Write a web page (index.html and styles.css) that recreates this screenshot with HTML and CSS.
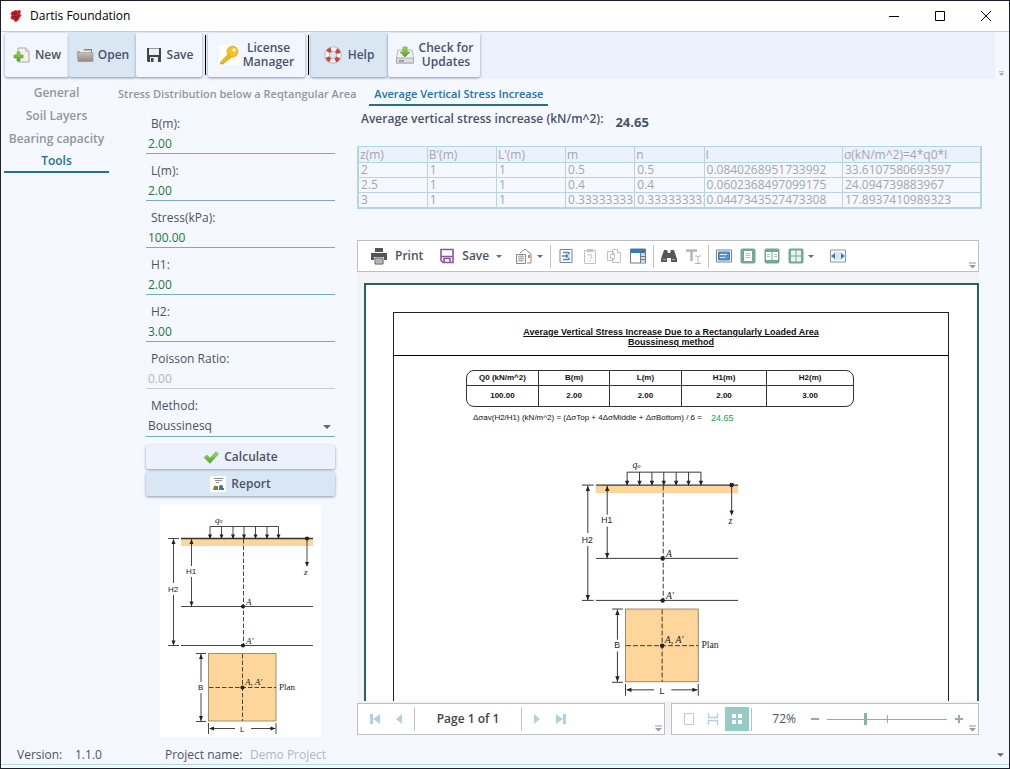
FILE: index.html
```html
<!DOCTYPE html>
<html lang="en">
<head>
<meta charset="utf-8">
<title>Dartis Foundation</title>
<link rel="stylesheet" href="styles.css">
</head>
<body>
<svg class="defs" aria-hidden="true">
  <defs>
    <linearGradient id="leaf" x1="0" y1="0" x2="0" y2="1"><stop offset="0" stop-color="#a3dc60"/><stop offset="1" stop-color="#4f9f28"/></linearGradient>
    <linearGradient id="folderg" x1="0" y1="0" x2="0" y2="1"><stop offset="0" stop-color="#c9c2ba"/><stop offset="1" stop-color="#8f8982"/></linearGradient>
  </defs>
  <symbol id="diagram" viewBox="0 0 161 232">
    <rect width="161" height="232" fill="#fff"/>
    <rect x="21" y="34" width="132" height="7" fill="#fed59b"/>
    <rect x="48.500" y="148.500" width="67.500" height="67.500" fill="#fed59b" stroke="#8c7a60" stroke-width=".8"/>
    <g stroke="#333" fill="none" stroke-width=".9">
      <path d="M21 33.500h132" stroke-width="1.300"/>
      <path d="M50 33V21.500h68.500V33M61.500 21.500V33M73 21.500V33M84 21.500V33M95.500 21.500V33M107 21.500V33"/>
      <path d="M147 33.500V60M21 101.500h132M21 140.500h132M8 33.500h11M8 140.500h11"/>
      <path d="M31.500 34v27M31.500 72v29M13.500 34v44M13.500 90v50"/>
      <path d="M83.500 34v107" stroke-dasharray="4.500 2"/>
      <path d="M82.500 149v67M49 182.500h67" stroke-dasharray="4.500 2"/>
      <path d="M36 148.500h10M36 216.500h10M41 149v28M41 188v28M48.500 218v11M116 218v11M50 223.500h25M91 223.500h24"/>
    </g>
    <g fill="#222">
      <circle cx="147" cy="33.500" r="2.100"/><circle cx="83" cy="101.500" r="2.100"/><circle cx="83" cy="140.500" r="2.100"/><circle cx="82.500" cy="182.500" r="2.100"/>
      <path d="M50 34l-2-4.500h4zM61.500 34l-2-4.500h4zM73 34l-2-4.500h4zM84 34l-2-4.500h4zM95.500 34l-2-4.500h4zM107 34l-2-4.500h4zM118.500 34l-2-4.500h4z"/>
      <path d="M147 62l-2-5h4zM31.500 34l-2 5h4zM31.500 101.500l-2-5h4zM13.500 34l-2 5h4zM13.500 140.500l-2-5h4zM41 149l-2 5h4zM41 216l-2-5h4zM49 223.500l5-2v4zM115.500 223.500l-5-2v4z"/>
    </g>
  </symbol>
  <symbol id="overflow" viewBox="0 0 7 7"><path d="M0 1h7" stroke="#999"/><path d="M0 3h7L3.500 6.500z" fill="#999"/></symbol>
  <symbol id="caret" viewBox="0 0 8 4"><path d="M0 0h8L4 4z" fill="#666a72"/></symbol>
</svg>

<div class="window">
  <header class="titlebar">
    <svg class="app-icon" viewBox="0 0 14 14"><path d="M3 2.500L5 2l1-1 2 .6L11 1l1 2-1 1.500 1.500 2L11 8l-1 2.500-2 2-2 .500-1-2-2-.5L1.500 9l1-2.500-1-2z" fill="#c5242c"/><path d="M4 4l2 1 2-1.500M3.500 8l2-1 2 1.500 2-2M6 10l2-.5" stroke="#6e0f18" fill="none"/></svg>
    <h1>Dartis Foundation</h1>
    <div class="win-controls">
      <button aria-label="Minimize"><svg viewBox="0 0 12 12"><path d="M1 6.500h10" stroke="#000"/></svg></button>
      <button aria-label="Maximize"><svg viewBox="0 0 12 12"><path d="M1.500 1.500h9v9h-9z" fill="none" stroke="#000"/></svg></button>
      <button aria-label="Close"><svg viewBox="0 0 12 12"><path d="M1 1l10 10M11 1L1 11" stroke="#000"/></svg></button>
    </div>
  </header>

  <div class="ribbon">
    <div class="ribbon-bar">
      <button class="tool w-new"><svg class="i18" viewBox="0 0 18 18"><path d="M5 2h8l3 3v11H5z" fill="#f2f2ea" stroke="#a9aaa2"/><path d="M13 2v3h3" fill="#fff" stroke="#a9aaa2"/><path d="M4 6h3v3h3v3H7v3H4v-3H1V9h3z" fill="url(#leaf)" stroke="#5ba336" stroke-width=".7"/></svg>New</button>
      <button class="tool tinted w-open"><svg class="i18" viewBox="0 0 18 18"><path d="M2 5h5l1.500-2H16v12H2z" fill="#8b857e"/><path d="M3.500 4.500H15V8H3.500z" fill="#eee"/><path d="M1 6.500h16v9H2z" fill="url(#folderg)" stroke="#8f8982" stroke-width=".5"/></svg>Open</button>
      <button class="tool w-save"><svg class="i18" viewBox="0 0 18 18"><path d="M2 2h14v14H3l-1-1z" fill="#3f454b"/><path d="M4 2.500h10V9H4z" fill="#e9f2f6"/><path d="M5 11h8v5H5z" fill="#eee"/><path d="M6 12h2.500v4H6z" fill="#3f454b"/></svg>Save</button>
      <span class="sep"></span>
      <button class="tool w-license"><svg class="i20" viewBox="0 0 20 20"><rect width="20" height="20" fill="#fff"/><path d="M9.500 9L2 16.500 1.500 19h3l.5-2h2l.5-2h2l3-3z" fill="#f5b916" stroke="#cf9414" stroke-width=".7"/><circle cx="13.500" cy="6.500" r="5.500" fill="#f9bf1c" stroke="#d99d18" stroke-width=".7"/><circle cx="15" cy="5" r="1.700" fill="#fff"/></svg><span>License<br>Manager</span></button>
      <span class="sep"></span>
      <button class="tool tinted w-help"><svg class="i18" viewBox="0 0 18 18"><circle cx="9" cy="9" r="6" fill="none" stroke="#f7f3f1" stroke-width="4.500"/><circle cx="9" cy="9" r="6" fill="none" stroke="#c6483f" stroke-width="4.500" stroke-dasharray="4 5.425" stroke-dashoffset="-2.700"/><circle cx="9" cy="9" r="8.200" fill="none" stroke="#a9928f" stroke-width=".6"/><circle cx="9" cy="9" r="3.600" fill="none" stroke="#a9928f" stroke-width=".6"/></svg>Help</button>
      <button class="tool w-check"><svg class="i20" viewBox="0 0 20 20"><path d="M3 5h14l1.500 8v5h-17v-5z" fill="#f6f6f6" stroke="#b4b6b9"/><path d="M1.500 13h17v5h-17z" fill="#dcdde0" stroke="#aaa"/><path d="M4 15h5v2H4z" fill="#9b9ea3"/><path d="M8 2h4v5h3l-5 5-5-5h3z" fill="url(#leaf)" stroke="#5a9f30" stroke-width=".6"/></svg><span>Check for<br>Updates</span></button>
    </div>
    <svg class="overflow"><use href="#overflow"/></svg>
  </div>

  <main class="main">
    <nav class="side-tabs">
      <a href="#general">General</a>
      <a href="#soil">Soil Layers</a>
      <a href="#bearing">Bearing capacity</a>
      <a href="#tools" class="active">Tools</a>
    </nav>

    <div class="content">
      <nav class="top-tabs">
        <a href="#distribution">Stress Distribution below a Reqtangular Area</a>
        <a href="#average" class="active">Average Vertical Stress Increase</a>
      </nav>
      <div class="columns">
        <form class="form">
          <div class="field"><label for="b">B(m):</label><input id="b" value="2.00"></div>
          <div class="field"><label for="l">L(m):</label><input id="l" value="2.00"></div>
          <div class="field"><label for="stress">Stress(kPa):</label><input id="stress" value="100.00"></div>
          <div class="field"><label for="h1">H1:</label><input id="h1" value="2.00"></div>
          <div class="field"><label for="h2">H2:</label><input id="h2" value="3.00"></div>
          <div class="field"><label for="poisson">Poisson Ratio:</label><input id="poisson" value="0.00" disabled></div>
          <div class="field"><label for="method">Method:</label>
            <div class="select"><select id="method"><option>Boussinesq</option></select><svg class="caret"><use href="#caret"/></svg></div>
          </div>
          <div class="actions">
            <button type="button" class="action"><svg class="i16" viewBox="0 0 16 16"><path d="M1 8.500L4 6l3 3 6-6.500L15.500 5 7 14.500z" fill="url(#leaf)" stroke="#6db33c" stroke-width=".5"/></svg>Calculate</button>
            <button type="button" class="action tinted"><svg class="i16" viewBox="0 0 16 16"><rect width="16" height="16" fill="#fff"/><path d="M4 2.500h9M5 4.500h7M6 6.500h3" stroke="#8a8a8a"/><path d="M4 10h4v4H3z" fill="#7c7c45"/><circle cx="11" cy="11" r="2" fill="#3f6f9e"/><path d="M9 12h5v2H9z" fill="#3f7f78"/></svg>Report</button>
          </div>
          <svg class="form-figure" viewBox="0 0 161 232" role="img" aria-label="Loaded area diagram">
            <use href="#diagram" width="161" height="232"/>
            <g class="fig-sans"><text x="26" y="69">H1</text><text x="8" y="87">H2</text><text x="38" y="185">B</text><text x="80" y="227">L</text></g>
            <g class="fig-serif"><text x="55" y="18">q<tspan class="sub">o</tspan></text><text x="144" y="70">z</text><text x="86" y="100">A</text><text x="86" y="139">A′</text><text x="85" y="180">A, A′</text></g>
            <text class="fig-plan" x="119" y="185">Plan</text>
          </svg>
        </form>

        <section class="results">
          <h2 class="result"><span>Average vertical stress increase (kN/m^2):</span><output>24.65</output></h2>
          <table class="grid">
            <colgroup><col class="c-s"><col class="c-s"><col class="c-s"><col class="c-s"><col class="c-s"><col class="c-l"><col class="c-l"></colgroup>
            <thead><tr><th>z(m)</th><th>B'(m)</th><th>L'(m)</th><th>m</th><th>n</th><th>I</th><th>σ(kN/m^2)=4*q0*I</th></tr></thead>
            <tbody>
              <tr><td>2</td><td>1</td><td>1</td><td>0.5</td><td>0.5</td><td>0.0840268951733992</td><td>33.6107580693597</td></tr>
              <tr><td>2.5</td><td>1</td><td>1</td><td>0.4</td><td>0.4</td><td>0.0602368497099175</td><td>24.094739883967</td></tr>
              <tr><td>3</td><td>1</td><td>1</td><td>0.3333333333</td><td>0.3333333333</td><td>0.0447343527473308</td><td>17.8937410989323</td></tr>
            </tbody>
          </table>

          <div class="viewer">
            <div class="vbar">
              <button class="vbtn v-print"><svg class="i18" viewBox="0 0 18 18"><path d="M5 1h8v4H5zM1 6h16v7h-3v-3H4v3H1z" fill="#50565c"/><path d="M5 11h8v6H5z" fill="#ddd" stroke="#50565c"/><path d="M6 13h6M6 15h6" stroke="#8a8a8a"/></svg>Print</button>
              <button class="vbtn v-save"><svg class="i16" viewBox="0 0 16 16"><path d="M2 1.500h12v13H4l-2-2z" fill="#fff" stroke="#8a55a5" stroke-width="1.600"/><path d="M2 8.500h12M5 14v-3.500h6V14" fill="none" stroke="#8a55a5" stroke-width="1.600"/></svg>Save<svg class="mini"><use href="#caret"/></svg></button>
              <button class="vbtn" aria-label="Send"><svg class="i18" viewBox="0 0 18 18"><path d="M5 6l5-4 6 5v9h-4" fill="#fff" stroke="#8a8a8a"/><path d="M1.500 7.500h9v9h-9z" fill="#f7f7f7" stroke="#8a8a8a"/><path d="M3 9.500h6M3 11.500h6M3 13.500h6M5 8v7M7 8v7" stroke="#b5b5b5"/><path d="M13 8h2v3h-2z" fill="#d9815c"/></svg><svg class="mini"><use href="#caret"/></svg></button>
              <span class="vsep"></span>
              <button class="vbtn" aria-label="Parameters"><svg class="i16" viewBox="0 0 16 16"><path d="M2 1.500h12v13H2z" fill="#fff" stroke="#7a848e"/><path d="M5 4.500h6v2M4 8h5M5 11.500h6v-2" stroke="#4b8bb5" fill="none" stroke-width="1.500"/><path d="M8 5.500L11 8l-3 2.500z" fill="#4b8bb5"/></svg></button>
              <button class="vbtn" aria-label="Paste"><svg class="i16" viewBox="0 0 16 16"><path d="M2.500 2.500h11v13h-11z" fill="#fafafa" stroke="#c2c2c2"/><path d="M5 1h6v3H5z" fill="#c2c2c2"/><path d="M6 7.500q2-2 3.500 0T8 11M8 12v1.500" stroke="#c2c2c2" fill="none"/></svg></button>
              <button class="vbtn" aria-label="Copy"><svg class="i16" viewBox="0 0 16 16"><path d="M1.500 3.500h6v9h-6zM6.500 1.500h5l3 3v10h-8z" fill="#fff" stroke="#c2c2c2"/><path d="M11.500 1.500v3h3M4.500 6.500h4v4h-4z" fill="#fff" stroke="#c2c2c2"/></svg></button>
              <button class="vbtn" aria-label="Thumbnails"><svg class="i16" viewBox="0 0 16 16"><path d="M.5 1h15v14H.5z" fill="#fff" stroke="#727b84"/><path d="M1 1h14v4H1z" fill="#2e7cb8"/><path d="M10 5h5v9.500h-5z" fill="#cfd9e2"/><path d="M10.500 5v10M11 8.500h4M11 11.500h4" stroke="#727b84"/></svg></button>
              <span class="vsep"></span>
              <button class="vbtn" aria-label="Find"><svg class="i16" viewBox="0 0 16 16"><path d="M3 2h3l1 3h2l1-3h3l3 9v3h-6v-4H6v4H0v-3z" fill="#55585c"/><path d="M2 11.500h3M11 11.500h3" stroke="#aaa"/></svg></button>
              <button class="vbtn" aria-label="Text selection"><svg class="i16" viewBox="0 0 16 16"><path d="M1 2.500h11M6.500 2v11" stroke="#b4b6b8" stroke-width="2.500" fill="none"/><path d="M10 8h2l1 1 1-1h2M13 9v6M10 15.500h6" stroke="#b4b6b8" fill="none"/></svg></button>
              <span class="vsep"></span>
              <button class="vbtn" aria-label="Fit screen"><svg class="i16" viewBox="0 0 16 16"><path d="M.5 2h15v12H.5z" fill="#fff" stroke="#71859e"/><path d="M2.500 4h11v8h-11z" fill="#5d93d0" stroke="#3f76b5"/><path d="M4 6.500h7M4 9.500h5" stroke="#dce9f7"/></svg></button>
              <button class="vbtn" aria-label="Whole page"><svg class="i16" viewBox="0 0 16 16"><rect x=".5" y=".5" width="15" height="15" rx="2" fill="#73a893"/><path d="M4 3h8v10H4z" fill="#fff"/><path d="M5.500 5.500h5M5.500 7.500h5M5.500 9.500h5" stroke="#a9c9bc"/></svg></button>
              <button class="vbtn" aria-label="Two pages"><svg class="i16" viewBox="0 0 16 16"><rect x=".5" y=".5" width="15" height="15" rx="2" fill="#73a893"/><path d="M2 4h5.500v8H2zM8.500 4H14v8H8.500z" fill="#fff"/><path d="M3 6.500h3M3 8.500h3M10 6.500h3M10 8.500h3" stroke="#a9c9bc"/></svg></button>
              <button class="vbtn v-multi" aria-label="Multiple pages"><svg class="i16" viewBox="0 0 16 16"><rect x=".5" y=".5" width="15" height="15" rx="2" fill="#73a893"/><path d="M3 2.500h4.500v5H3zM8.500 2.500H13v5H8.500zM3 8.500h4.500v5H3zM8.500 8.500H13v5H8.500z" fill="#eaf4ef"/></svg><svg class="mini"><use href="#caret"/></svg></button>
              <button class="vbtn" aria-label="Page width"><svg class="i16" viewBox="0 0 16 16"><path d="M.5 2h15v12H.5z" fill="#fff" stroke="#8494a6"/><path d="M4 4h8v8H4z" fill="#d5e6f5"/><path d="M1 8l4-3v6zM15 8l-4-3v6z" fill="#4279ae"/></svg></button>
              <svg class="overflow"><use href="#overflow"/></svg>
            </div>

            <div class="canvas">
              <article class="sheet">
                <div class="frame">
                  <h3>Average Vertical Stress Increase Due to a Rectangularly Loaded Area<br>Boussinesq method</h3>
                  <div class="params-box">
                    <table class="params">
                      <colgroup><col class="p-s"><col class="p-s"><col class="p-s"><col><col></colgroup>
                      <tr><th>Q0 (kN/m^2)</th><th>B(m)</th><th>L(m)</th><th>H1(m)</th><th>H2(m)</th></tr>
                      <tr><td>100.00</td><td>2.00</td><td>2.00</td><td>2.00</td><td>3.00</td></tr>
                    </table>
                  </div>
                  <p class="formula"><span>Δσav(H2/H1) (kN/m^2) = (ΔσTop + 4ΔσMiddle + ΔσBottom) / 6 =</span><output>24.65</output></p>
                  <svg class="sheet-figure" viewBox="0 0 161 232" role="img" aria-label="Loaded area diagram">
                    <use href="#diagram" width="161" height="232"/>
                    <g class="fig-sans"><text x="26" y="69">H1</text><text x="8" y="87">H2</text><text x="38" y="185">B</text><text x="80" y="227">L</text></g>
                    <g class="fig-serif"><text x="55" y="18">q<tspan class="sub">o</tspan></text><text x="144" y="70">z</text><text x="86" y="100">A</text><text x="86" y="139">A′</text><text x="85" y="180">A, A′</text></g>
                    <text class="fig-plan" x="119" y="185">Plan</text>
                  </svg>
                </div>
              </article>
            </div>

            <div class="vfoot">
              <div class="pager">
                <button aria-label="First page"><svg class="i12" viewBox="0 0 12 12"><path d="M1 1h3v10H1zM11 1v10L4 6z" fill="#b3cfe0"/></svg></button>
                <button aria-label="Previous page"><svg class="i12" viewBox="0 0 12 12"><path d="M9 1v10L3 6z" fill="#b3cfe0"/></svg></button>
                <span class="page-no">Page 1 of 1</span>
                <button aria-label="Next page"><svg class="i12" viewBox="0 0 12 12"><path d="M3 1v10l6-5z" fill="#b3cfe0"/></svg></button>
                <button aria-label="Last page"><svg class="i12" viewBox="0 0 12 12"><path d="M8 1h3v10H8zM1 1v10l7-5z" fill="#b3cfe0"/></svg></button>
                <svg class="overflow"><use href="#overflow"/></svg>
              </div>
              <div class="zoombar">
                <button aria-label="Single page"><svg class="i12" viewBox="0 0 12 12"><path d="M1.500.5h9v11h-9z" fill="#fff" stroke="#b3cfe0"/></svg></button>
                <button aria-label="Continuous"><svg class="i12" viewBox="0 0 12 12"><path d="M1.500 0v4.500h9V0M1.500 12V7.500h9V12" fill="none" stroke="#b3cfe0" stroke-width="1.400"/></svg></button>
                <button class="on" aria-label="Multi page"><svg class="i12" viewBox="0 0 12 12"><path d="M1 1h4v4H1zM7 1h4v4H7zM1 7h4v4H1zM7 7h4v4H7z" fill="#fff"/></svg></button>
                <span class="vsep"></span>
                <label class="pct" for="zoom">72%</label>
                <button class="step" aria-label="Zoom out"><svg class="i8" viewBox="0 0 8 8"><path d="M0 4h8" stroke="#7fb8a6" stroke-width="2"/></svg></button>
                <input id="zoom" type="range" min="0" max="100" value="32">
                <button class="step" aria-label="Zoom in"><svg class="i8" viewBox="0 0 8 8"><path d="M0 4h8M4 0v8" stroke="#7fb8a6" stroke-width="2"/></svg></button>
                <svg class="overflow"><use href="#overflow"/></svg>
              </div>
            </div>
          </div>
        </section>
      </div>
    </div>
  </main>

  <footer class="status">
    <span class="ver">Version:</span><span class="num">1.1.0</span>
    <label for="project">Project name:</label><input id="project" value="Demo Project" disabled>
    <svg class="overflow"><use href="#caret"/></svg>
  </footer>
</div>
</body>
</html>
```
FILE: styles.css
```css
* { box-sizing: border-box; }
body { margin: 0; font: 12px/16px "Open Sans", "Noto Sans", sans-serif; color: #4b5266; }
button, input, select { font: inherit; color: inherit; margin: 0; padding: 0; border: 0; background: none; border-radius: 0; }
svg { display: block; flex: none; }
h1, h2, h3, p { margin: 0; font: inherit; }
a { color: inherit; text-decoration: none; }
.defs { position: absolute; width: 0; height: 0; }
.i20 { width: 20px; height: 20px; }
.i18 { width: 18px; height: 18px; }
.i16 { width: 16px; height: 16px; }
.i12 { width: 12px; height: 12px; }
.i8 { width: 8px; height: 8px; }
.mini { width: 6px; height: 3px; }
.overflow { width: 7px; height: 7px; margin-left: auto; }

.window { height: 100vh; min-height: 769px; display: flex; flex-direction: column; background: #f5f9ff; border: 1px solid #1d1f2c; }
.titlebar { display: flex; align-items: center; height: 31px; background: #fff; border-bottom: 1px solid #b9d3e2; padding-left: 8px; color: #000; }
.app-icon { width: 14px; height: 14px; margin-right: 7px; }
.win-controls { display: flex; margin-left: auto; }
.win-controls button { width: 46px; height: 30px; display: grid; place-items: center; }
.win-controls svg { width: 12px; height: 12px; }

.ribbon { display: flex; align-items: flex-end; padding: 0 5px 0 4px; }
.ribbon-bar { flex: 1; display: flex; background: #ecf1fd; padding: 1px 0 2px; margin-right: 4px; }
.ribbon .overflow { margin-bottom: 3px; width: 5px; height: 5px; }
.tool { display: flex; align-items: center; justify-content: center; gap: 4px; height: 44px; font-weight: 600; line-height: 14px; background: #f2f6fe; border-radius: 2px; box-shadow: 0 1px 3px #8d97a8; }
.tool.tinted { background: #d9e7f5; }
.w-new { width: 64px; }
.w-open { width: 67px; }
.w-save { width: 66px; }
.w-license { width: 97px; }
.w-help { width: 76px; gap: 6px; }
.w-check { width: 92px; margin-left: 1px; }
.sep { width: 1px; background: #000; margin: 2px 2px 2px 3px; }

.main { flex: 1; min-height: 0; display: flex; padding: 3px 27px 10px 3px; }
.side-tabs { width: 105px; display: flex; flex-direction: column; gap: 1px; font-weight: 600; color: #92959e; text-align: center; }
.side-tabs a { height: 22px; line-height: 22px; }
.side-tabs .active { color: #1f6f94; border-bottom: 2px solid #1f7290; line-height: 20px; }
.content { flex: 1; min-width: 0; display: flex; flex-direction: column; }
.top-tabs { display: flex; gap: 8px; font-size: 11px; font-weight: 600; color: #92959e; padding: 2px 0 0 4px; }
.top-tabs a { padding: 2px 5px; border-bottom: 2px solid transparent; white-space: nowrap; }
.top-tabs .active { color: #2372aa; border-color: #1f7480; }
.columns { flex: 1; min-height: 0; display: flex; padding-left: 37px; }

.form { width: 189px; margin-right: 22px; padding-top: 10px; }
.field { height: 47px; }
.field label { display: block; padding-left: 5px; height: 18px; }
.field input { display: block; width: 100%; height: 20px; padding: 0 2px; color: #22763a; border-bottom: 1px solid #7aa9c4; }
.field input:disabled { color: #b3b6bd; border-color: #c5cbd6; }
.select { display: grid; align-items: center; }
.select select { grid-area: 1 / 1; width: 100%; height: 21px; padding-left: 2px; appearance: none; border-bottom: 1px solid #6fb0b8; }
.caret { grid-area: 1 / 1; justify-self: end; width: 8px; height: 4px; margin-right: 4px; pointer-events: none; }
.actions { display: grid; gap: 3px; }
.action { display: flex; align-items: center; justify-content: center; gap: 5px; height: 24px; font-weight: 600; background: #ecf1fd; box-shadow: 0 1px 3px #8d97a8; border-radius: 2px; }
.action.tinted { background: #d9e7f5; }
.form-figure { width: 161px; height: 232px; margin: 9px 0 0 14px; }
.fig-sans { font: 8px "Liberation Sans", sans-serif; fill: #222; }
.fig-serif { font: italic 9px "Liberation Serif", serif; fill: #222; }
.fig-plan { font: 9px "Liberation Serif", serif; fill: #222; }
.sub { font-size: 6px; }

.results { flex: 1; min-width: 0; display: flex; flex-direction: column; padding-top: 5px; }
.result { display: flex; gap: 12px; font-weight: 600; padding-left: 4px; height: 35px; }
.result output { font-size: 13px; font-weight: 700; padding-top: 3px; }
.grid { width: 100%; table-layout: fixed; border-collapse: collapse; color: #a3a6ad; line-height: 14px; border: 2px solid #b5d4e8; border-top-width: 1px; }
.grid th, .grid td { border: 1px solid #b5d4e8; padding: 0 0 0 2px; text-align: left; font-weight: 400; overflow: hidden; white-space: nowrap; }
.grid th { background: #ecf1fd; padding-left: 1px; line-height: 15px; }
.c-s { width: 11%; }
.c-l { width: 22%; }

.viewer { flex: 1; min-height: 0; display: flex; flex-direction: column; margin: 31px 3px 0 0; background: #f2f3f5; }
.vbar { display: flex; align-items: center; height: 32px; background: #fff; border: 1px solid #bfbfbf; padding: 0 2px 0 12px; gap: 8px; font-weight: 600; }
.vbar > .overflow, .vfoot .overflow { align-self: flex-end; margin-bottom: 2px; }
.vbtn { display: flex; align-items: center; gap: 4px; }
.v-print { gap: 7px; margin-right: 8px; }
.v-save { gap: 7px; margin-right: 5px; }
.v-multi { margin-right: 8px; }
.vsep { width: 1px; height: 23px; background: #bfc2c6; }
.vbar .vsep { margin: 0 -1px; }
.canvas { flex: 1; min-height: 0; overflow: hidden; padding: 11px 0 0 7px; margin-bottom: 2px; }
.sheet { height: 870px; background: #fff; border: 2px solid #2d6259; padding: 27px 28px 27px 27px; color: #111; font: 9px/10px "Liberation Sans", Arial, sans-serif; }
.frame { height: 100%; border: 1px solid #222; display: flex; flex-direction: column; }
.frame h3 { text-align: center; font-weight: 700; text-decoration: underline; padding: 14px 0 8px; border-bottom: 1px solid #000; }
.params-box { width: 70%; margin: 14px 0 0 13%; border: 1px solid #333; border-radius: 8px; overflow: hidden; }
.params { width: 100%; table-layout: fixed; border-collapse: collapse; font-size: 8px; }
.p-s { width: 18.5%; }
.params th, .params td { padding: 0; text-align: center; font-weight: 700; border-left: 1px solid #333; height: 21px; }
.params th { height: 14px; border-bottom: 1px solid #333; }
.params th:first-child, .params td:first-child { border-left: 0; }
.formula { display: flex; gap: 9px; margin: 6px 0 0 79px; font-size: 8px; }
.formula output { font-size: 9px; color: #1ca04c; }
.sheet-figure { width: 174px; height: 250px; margin: 26px 0 0 179px; }

.vfoot { display: flex; gap: 6px; }
.pager, .zoombar { flex: 1 1 0; min-width: 0; display: flex; align-items: center; height: 32px; background: #fff; border: 1px solid #bfbfbf; padding: 0 2px 0 5px; }
.vfoot button { width: 24px; height: 24px; display: grid; place-items: center; flex: none; }
.page-no { width: 108px; margin: 0 3px; line-height: 24px; text-align: center; border: solid #bfc2c6; border-width: 0 1px; font-weight: 600; color: #444; }
.zoombar .on { background: #95cbc5; }
.zoombar .vsep { margin-left: 2px; }
.pct { width: 53px; padding-right: 9px; text-align: right; }
.vfoot .step { width: 20px; }
#zoom { flex: 1; width: 0; height: 12px; margin: 0 2px; appearance: none; background: linear-gradient(#7fb8a6, #7fb8a6) center / 100% 1px no-repeat, linear-gradient(#7fb8a6, #7fb8a6) center / 1px 8px no-repeat; }
#zoom::-webkit-slider-thumb { appearance: none; width: 3px; height: 12px; background: #7fb8a6; }

.status { display: flex; align-items: center; height: 20px; margin-bottom: 3px; border-bottom: 1px solid #b9d3e2; padding: 0 5px 0 16px; }
.ver { width: 58px; }
.num { width: 90px; }
.status label { width: 85px; white-space: nowrap; }
.status input { flex: 1; color: #b3b6bd; }
.status .overflow { height: 4px; }
```
